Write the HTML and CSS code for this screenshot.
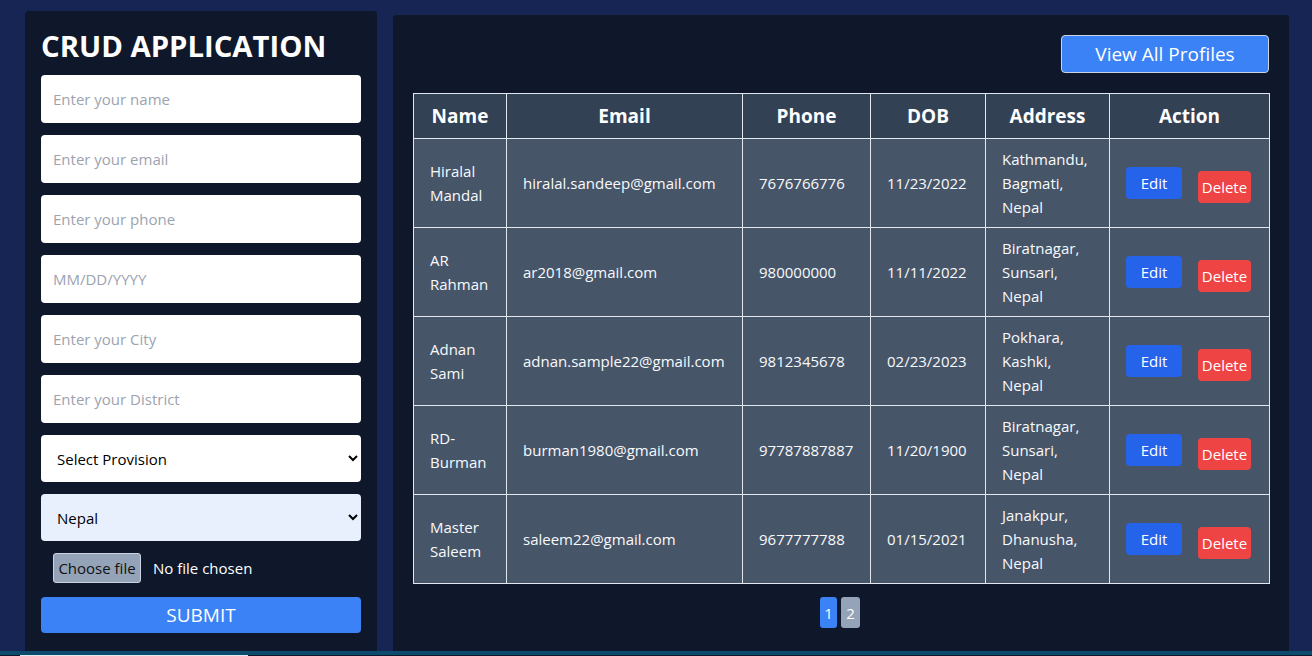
FILE: index.html
```html
<!DOCTYPE html>
<html lang="en">
<head>
<meta charset="utf-8">
<title>CRUD Application</title>
<link rel="stylesheet" href="styles.css">
</head>
<body>
<div class="layout">
  <aside class="form-panel">
    <h1 class="title">CRUD APPLICATION</h1>
    <form class="form">
      <input class="field" type="text" placeholder="Enter your name">
      <input class="field" type="text" placeholder="Enter your email">
      <input class="field" type="text" placeholder="Enter your phone">
      <input class="field" type="text" placeholder="MM/DD/YYYY">
      <input class="field" type="text" placeholder="Enter your City">
      <input class="field" type="text" placeholder="Enter your District">
      <select class="field select">
        <option>Select Provision</option>
      </select>
      <select class="field select select-filled">
        <option>Nepal</option>
      </select>
      <div class="file-row">
        <span class="file-btn">Choose file</span>
        <span class="file-name">No file chosen</span>
      </div>
      <button class="submit" type="button">SUBMIT</button>
    </form>
  </aside>
  <main class="list-panel">
    <div class="toolbar">
      <button class="view-all" type="button">View All Profiles</button>
    </div>
    <table class="table">
      <colgroup>
        <col class="c-name"><col class="c-email"><col class="c-phone"><col class="c-dob"><col class="c-addr"><col class="c-action">
      </colgroup>
      <thead>
        <tr><th>Name</th><th>Email</th><th>Phone</th><th>DOB</th><th>Address</th><th>Action</th></tr>
      </thead>
      <tbody>
        <tr>
          <td>Hiralal Mandal</td><td>hiralal.sandeep@gmail.com</td><td>7676766776</td><td>11/23/2022</td><td>Kathmandu, Bagmati, Nepal</td>
          <td><div class="actions"><button class="edit" type="button">Edit</button><button class="delete" type="button">Delete</button></div></td>
        </tr>
        <tr>
          <td>AR Rahman</td><td>ar2018@gmail.com</td><td>980000000</td><td>11/11/2022</td><td>Biratnagar, Sunsari, Nepal</td>
          <td><div class="actions"><button class="edit" type="button">Edit</button><button class="delete" type="button">Delete</button></div></td>
        </tr>
        <tr>
          <td>Adnan Sami</td><td>adnan.sample22@gmail.com</td><td>9812345678</td><td>02/23/2023</td><td>Pokhara, Kashki, Nepal</td>
          <td><div class="actions"><button class="edit" type="button">Edit</button><button class="delete" type="button">Delete</button></div></td>
        </tr>
        <tr>
          <td>RD-Burman</td><td>burman1980@gmail.com</td><td>97787887887</td><td>11/20/1900</td><td>Biratnagar, Sunsari, Nepal</td>
          <td><div class="actions"><button class="edit" type="button">Edit</button><button class="delete" type="button">Delete</button></div></td>
        </tr>
        <tr>
          <td>Master Saleem</td><td>saleem22@gmail.com</td><td>9677777788</td><td>01/15/2021</td><td>Janakpur, Dhanusha, Nepal</td>
          <td><div class="actions"><button class="edit" type="button">Edit</button><button class="delete" type="button">Delete</button></div></td>
        </tr>
      </tbody>
    </table>
    <nav class="pager">
      <button class="page active" type="button">1</button>
      <button class="page" type="button">2</button>
    </nav>
  </main>
</div>
<footer class="footer"><div class="footer-bar"></div></footer>
</body>
</html>
```
FILE: styles.css
```css
* { box-sizing: border-box; }
html, body { margin: 0; padding: 0; }
body {
  background: #172554;
  font-family: "Open Sans", "Noto Sans", sans-serif;
  color: #fff;
  font-size: 16px;
}
.layout {
  display: flex;
  gap: 16px;
  padding: 11px 23px 0 25px;
}
.form-panel {
  width: 352px;
  flex: none;
  background: #0f172a;
  border-radius: 4px 4px 0 0;
  padding: 17px 16px 18px;
  height: 640px;
}
.title {
  margin: 0 0 11px;
  font-size: 29.3px;
  line-height: 36px;
  font-weight: 700;
  color: #fff;
}
.form {
  display: flex;
  flex-direction: column;
  gap: 12px;
}
.field {
  width: 320px;
  height: 48px;
  border: 0;
  border-radius: 4px;
  background: #fff;
  padding: 0 12px;
  font-family: inherit;
  font-size: 15px;
  color: #000;
  margin: 0;
}
.field::placeholder { color: #9ca3af; }
.select {
  height: 47px;
  padding: 0 8px 0 12px;
  font-size: 15px;
}
.select-filled { background: #e8f0fe; }
.file-row {
  display: flex;
  align-items: center;
  gap: 12px;
  height: 30px;
  padding-left: 12px;
  margin-bottom: 2px;
}
.file-btn {
  background: #94a3b8;
  color: #111;
  border: 1px solid #cbd5e1;
  border-radius: 3px;
  height: 30px;
  width: 88px;
  display: flex;
  align-items: center;
  justify-content: center;
  font-size: 15px;
}
.file-name { font-size: 15px; color: #fff; }
.submit {
  height: 36px;
  border: 0;
  border-radius: 4px;
  background: #3b82f6;
  color: #fff;
  font-family: inherit;
  font-size: 19px;
  cursor: pointer;
}
.list-panel {
  width: 896px;
  flex: none;
  margin-top: 4px;
  height: 636px;
  background: #0f172a;
  border-radius: 4px 4px 0 0;
  padding: 20px;
}
.toolbar {
  display: flex;
  justify-content: flex-end;
  margin-bottom: 20px;
}
.view-all {
  width: 208px;
  height: 38px;
  background: #3b82f6;
  color: #fff;
  border: 1px solid #cbd5e1;
  border-radius: 4px;
  font-family: inherit;
  font-size: 19px;
}
.table {
  width: 856px;
  border-collapse: collapse;
  table-layout: fixed;
}
.c-name { width: 93px; }
.c-email { width: 236px; }
.c-phone { width: 128px; }
.c-dob { width: 115px; }
.c-addr { width: 124px; }
.c-action { width: 160px; }
.table th, .table td {
  border: 1px solid #e2e8f0;
}
.table th {
  background: #334155;
  font-size: 19px;
  font-weight: 700;
  line-height: 28px;
  padding: 8px 8px;
  text-align: center;
  height: 45px;
}
.table td {
  background: #475569;
  font-size: 15px;
  line-height: 24px;
  padding: 8px 16px;
  height: 89px;
  vertical-align: middle;
  color: #f8fafc;
}
.actions {
  display: flex;
  align-items: center;
  gap: 16px;
}
.edit, .delete {
  border: 0;
  border-radius: 4px;
  color: #fff;
  font-family: inherit;
  font-size: 15px;
  height: 32px;
  padding: 0;
}
.edit { background: #2563eb; width: 56px; }
.delete { background: #ef4444; width: 53px; margin-top: 8px; }
.pager {
  display: flex;
  justify-content: center;
  gap: 4px;
  margin-top: 13px;
  padding-right: 2px;
}
.page {
  border: 0;
  border-radius: 3px;
  background: #94a3b8;
  color: #fff;
  font-family: inherit;
  font-size: 15px;
  height: 31px;
  width: 19px;
  padding: 0;
}
.page.active { background: #3b82f6; width: 17px; }
.footer {
  border-top: 4px solid #0c4a6e;
  background: #0f172a;
  height: 5px;
}
.footer-bar {
  margin-left: 20px;
  width: 228px;
  height: 1px;
  background: #e2e8f0;
}
```
